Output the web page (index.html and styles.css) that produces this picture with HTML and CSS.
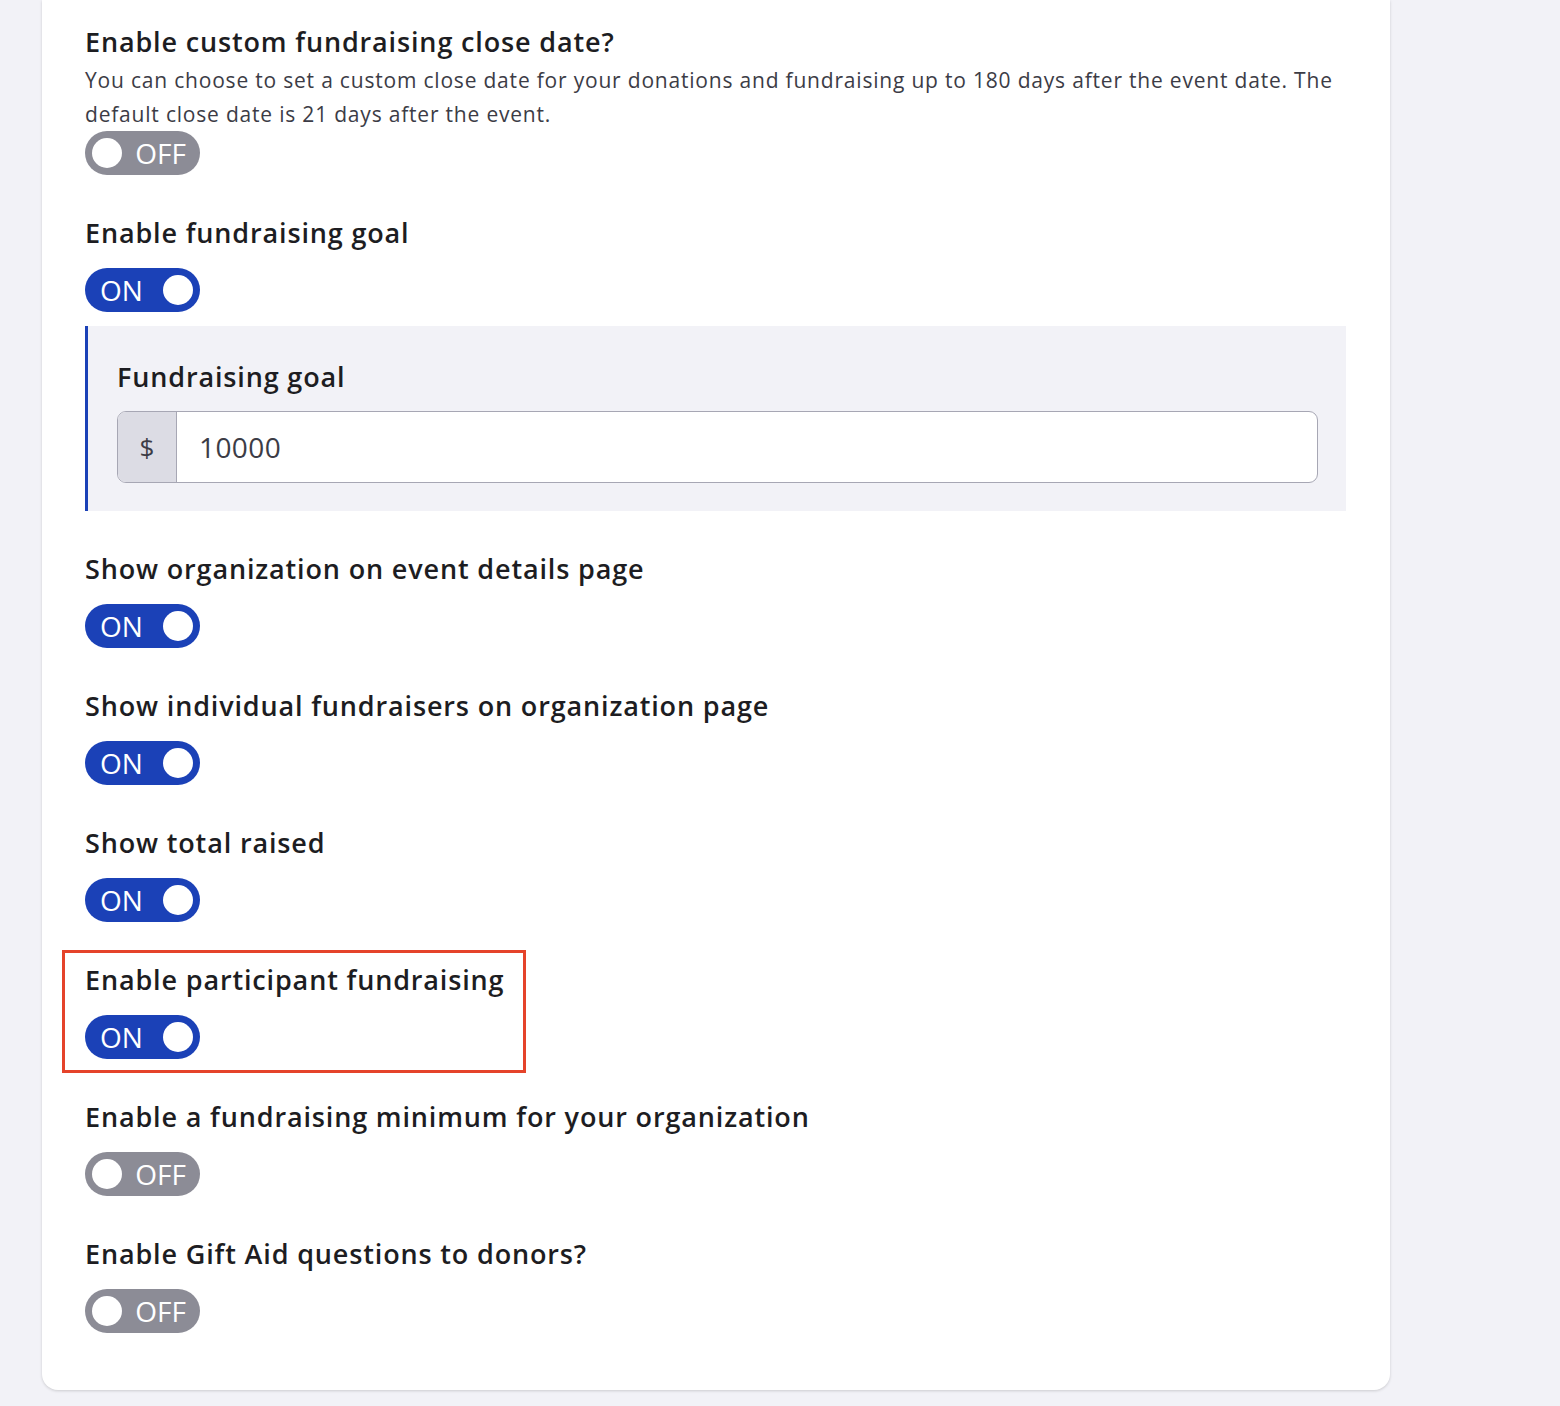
FILE: index.html
```html
<!DOCTYPE html>
<html lang="en">
<head>
<meta charset="utf-8">
<title>Fundraising settings</title>
<link rel="stylesheet" href="styles.css">
</head>
<body>
<div class="page">
  <section class="card">
    <div class="setting">
      <h3 class="setting-title">Enable custom fundraising close date?</h3>
      <p class="setting-desc">You can choose to set a custom close date for your donations and fundraising up to 180 days after the event date. The default close date is 21 days after the event.</p>
      <div class="toggle off"><span class="knob"></span><span class="toggle-label">OFF</span></div>
    </div>

    <div class="setting">
      <h3 class="setting-title spaced">Enable fundraising goal</h3>
      <div class="toggle on"><span class="toggle-label">ON</span><span class="knob"></span></div>
      <div class="subpanel">
        <label class="subpanel-label">Fundraising goal</label>
        <div class="input-group">
          <span class="input-prefix">$</span>
          <span class="input-value">10000</span>
        </div>
      </div>
    </div>

    <div class="setting">
      <h3 class="setting-title spaced">Show organization on event details page</h3>
      <div class="toggle on"><span class="toggle-label">ON</span><span class="knob"></span></div>
    </div>

    <div class="setting">
      <h3 class="setting-title spaced">Show individual fundraisers on organization page</h3>
      <div class="toggle on"><span class="toggle-label">ON</span><span class="knob"></span></div>
    </div>

    <div class="setting">
      <h3 class="setting-title spaced">Show total raised</h3>
      <div class="toggle on"><span class="toggle-label">ON</span><span class="knob"></span></div>
    </div>

    <div class="setting highlight">
      <h3 class="setting-title spaced">Enable participant fundraising</h3>
      <div class="toggle on"><span class="toggle-label">ON</span><span class="knob"></span></div>
    </div>

    <div class="setting">
      <h3 class="setting-title spaced">Enable a fundraising minimum for your organization</h3>
      <div class="toggle off"><span class="knob"></span><span class="toggle-label">OFF</span></div>
    </div>

    <div class="setting last">
      <h3 class="setting-title spaced">Enable Gift Aid questions to donors?</h3>
      <div class="toggle off"><span class="knob"></span><span class="toggle-label">OFF</span></div>
    </div>
  </section>
</div>
</body>
</html>
```

FILE: styles.css
```css
*, *::before, *::after { box-sizing: border-box; }

html, body {
  margin: 0;
  padding: 0;
  background: #f2f2f7;
}

body {
  font-family: "Open Sans", "Noto Sans", "Liberation Sans", sans-serif;
  color: #1d1d22;
}

.page {
  width: 1560px;
  height: 1406px;
  padding: 0 170px 0 42px;
}

.card {
  width: 1348px;
  background: #ffffff;
  border-radius: 0 0 16px 16px;
  box-shadow: 0 1px 3px rgba(0, 0, 0, 0.16);
  padding: 24px 44px 57px 43px;
}

.setting {
  position: relative;
  margin-bottom: 40px;
}

.setting.last { margin-bottom: 0; }

.setting-title {
  margin: 0;
  font-size: 27px;
  line-height: 36px;
  font-weight: 600;
  letter-spacing: 0.85px;
  color: #1d1d22;
}

.setting-title.spaced { margin-bottom: 17px; }

.setting-desc {
  margin: 3px 0 0;
  font-size: 21px;
  line-height: 34px;
  letter-spacing: 0.8px;
  color: #3c3c46;
}

.toggle {
  width: 115px;
  height: 44px;
  border-radius: 22px;
  display: flex;
  align-items: center;
  color: #ffffff;
  font-size: 28px;
  line-height: 1;
}

.toggle.on {
  background: #1b41b7;
  padding: 0 7px 0 15px;
  justify-content: space-between;
}

.toggle.off {
  background: #8c8c96;
  padding: 0 14px 0 7px;
  justify-content: space-between;
}

.knob {
  width: 30px;
  height: 30px;
  border-radius: 50%;
  background: #ffffff;
}

.toggle-label {
  display: block;
}

.subpanel {
  margin-top: 14px;
  background: #f2f2f7;
  border-left: 3px solid #1b41b7;
  padding: 33px 28px 28px 29px;
}

.subpanel-label {
  display: block;
  font-size: 27px;
  line-height: 36px;
  font-weight: 600;
  letter-spacing: 0.85px;
  color: #1d1d22;
  margin-bottom: 16px;
}

.input-group {
  display: flex;
  height: 72px;
  border: 1px solid #a7a7b4;
  border-radius: 9px;
  background: #ffffff;
  overflow: hidden;
}

.input-prefix {
  width: 59px;
  flex: none;
  background: #dcdce4;
  border-right: 1px solid #a7a7b4;
  display: flex;
  align-items: center;
  justify-content: center;
  font-size: 26px;
  color: #3c3c46;
}

.input-value {
  display: flex;
  align-items: center;
  padding-left: 22px;
  font-size: 28px;
  letter-spacing: 0.4px;
  color: #3c3c46;
}

.highlight::after {
  content: "";
  position: absolute;
  left: -23px;
  top: -12px;
  width: 464px;
  height: 123px;
  border: 3px solid #e5432a;
  pointer-events: none;
}
```
